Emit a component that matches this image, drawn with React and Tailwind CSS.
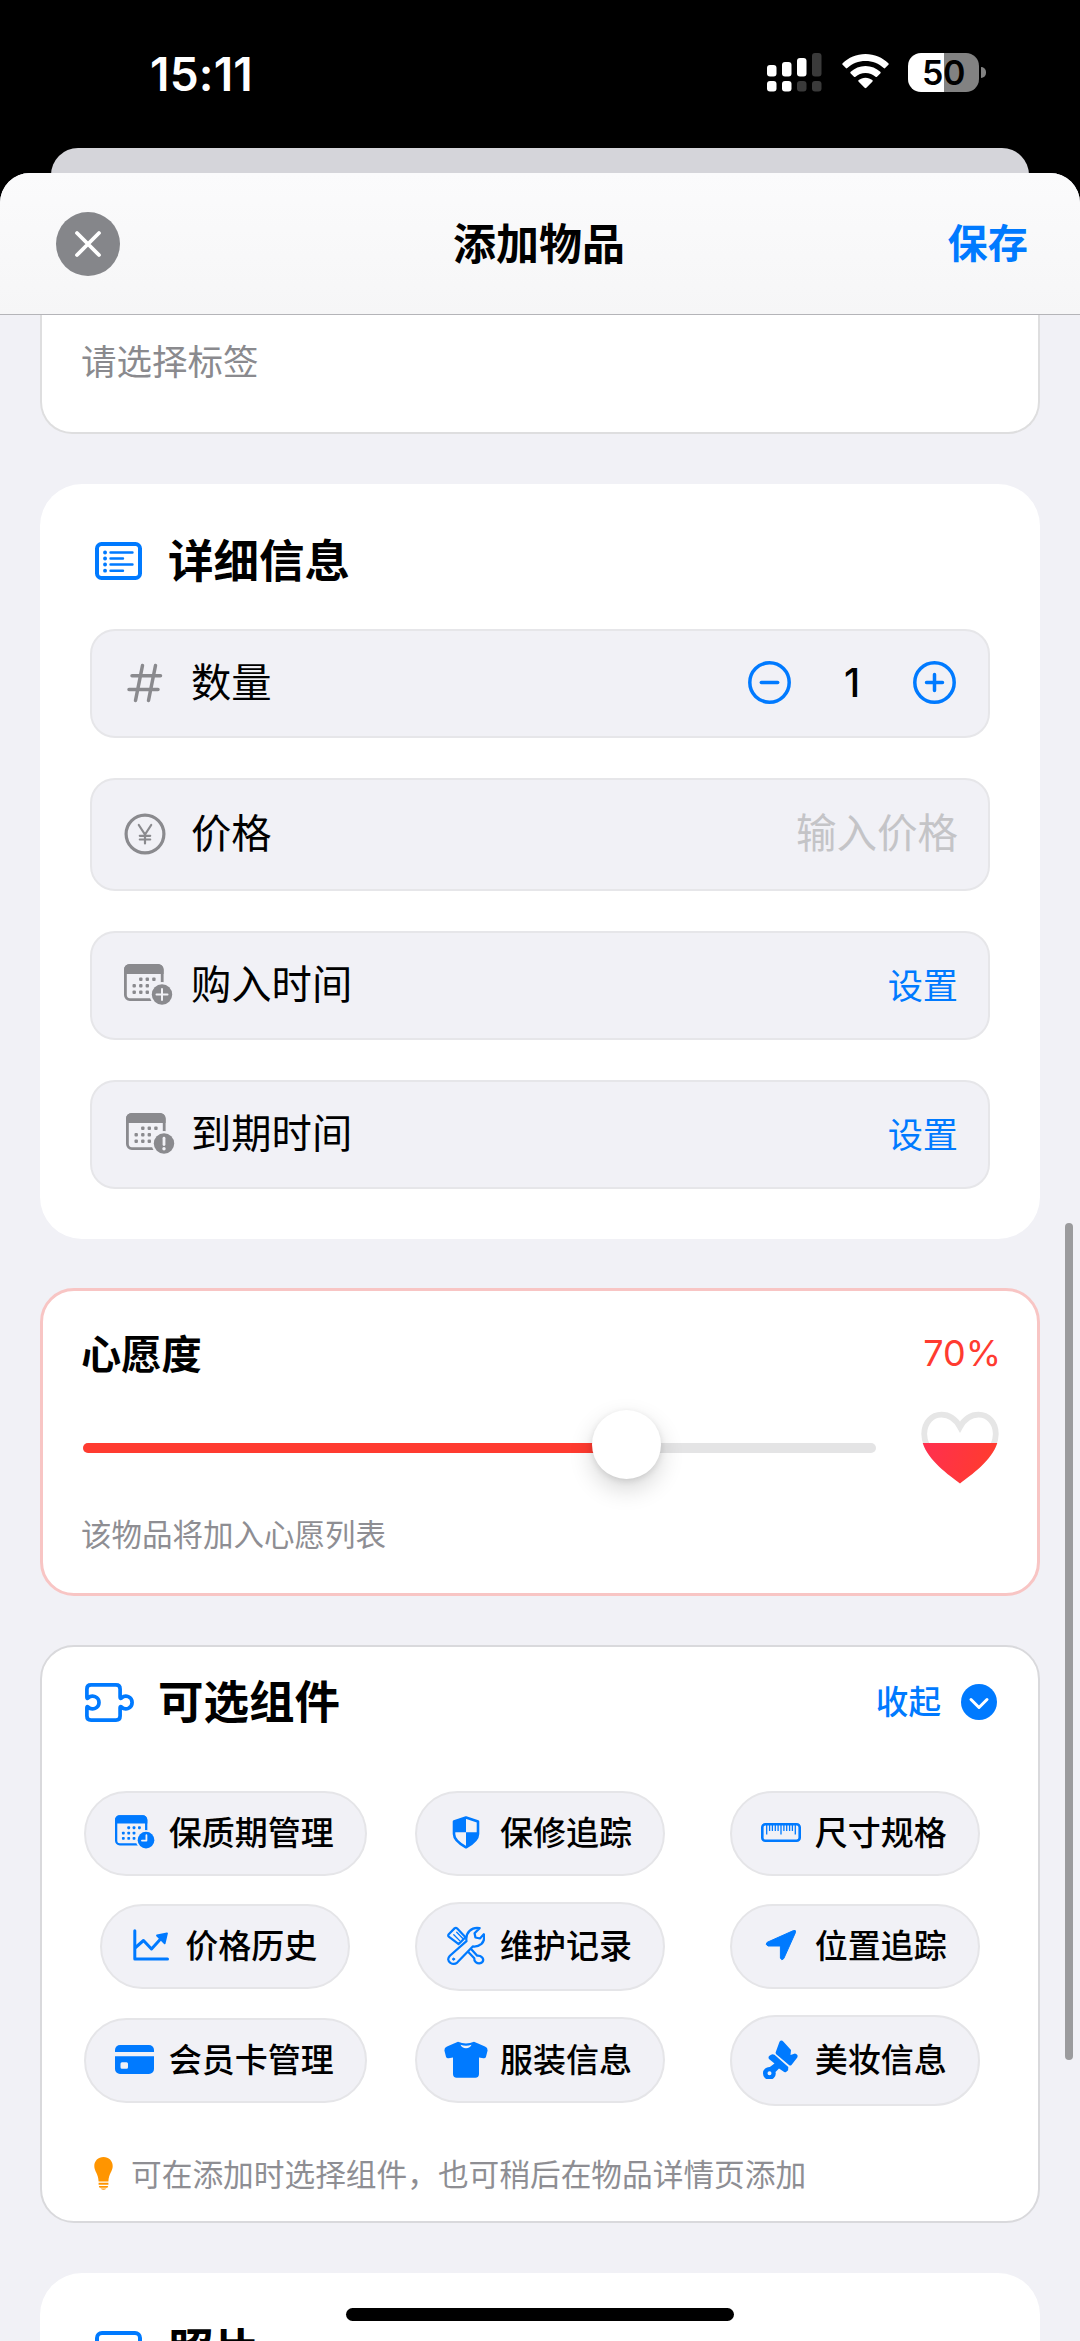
const BLUE = '#007aff';
const PANEL = '#f1f1f6';

function CalendarIcon({ className, color, badge }) {
  const dots = [
    [16.8, 15.3], [23.3, 15.3], [29.9, 15.3],
    [10.2, 21.8], [16.8, 21.8], [23.3, 21.8],
    [10.2, 28.3], [16.8, 28.3], [23.3, 28.3],
  ];
  return (
    <svg viewBox="0 0 49 41" className={className} fill="none">
      <rect x="1.400" y="1.400" width="36.800" height="34.200" rx="4.500" stroke={color} strokeWidth="2.800" />
      <path d="M0 10V5.500A5.500 5.500 0 0 1 5.500 0h28.600a5.500 5.500 0 0 1 5.500 5.500V10z" fill={color} />
      {dots.map(([x, y]) => (
        <rect key={`${x}-${y}`} x={x - 1.7} y={y - 1.7} width="3.400" height="3.400" rx="1" fill={color} />
      ))}
      <circle cx="38" cy="30.500" r="12.400" fill={PANEL} />
      <circle cx="38" cy="30.500" r="10.200" fill={color} />
      {badge === 'plus' && <path d="M38 25v11M32.500 30.500h11" stroke={PANEL} strokeWidth="2" strokeLinecap="round" />}
      {badge === 'alert' && (
        <g>
          <path d="M38 25.200v6.300" stroke={PANEL} strokeWidth="2.800" strokeLinecap="round" />
          <circle cx="38" cy="35.800" r="1.700" fill={PANEL} />
        </g>
      )}
      {badge === 'clock' && <path d="M38.500 24.500v6.500h-5.500" stroke={PANEL} strokeWidth="2.200" strokeLinecap="round" strokeLinejoin="round" />}
    </svg>
  );
}

function ListIcon() {
  return (
    <svg viewBox="0 0 47 38" className="h-[38px] w-[47px]" fill="none" stroke={BLUE} strokeLinecap="round">
      <rect x="2" y="2" width="43" height="34" rx="4.500" strokeWidth="4" />
      <path d="M15.500 10.500h22M15.500 16.500h12.500M15.500 22.500h22M15.500 28.700h12.500" strokeWidth="2.400" />
      <path d="M10 10.500h.1M10 16.500h.1M10 22.500h.1M10 28.700h.1" strokeWidth="3.800" />
    </svg>
  );
}

function PhotoIcon() {
  return (
    <svg viewBox="0 0 47 38" className="h-[38px] w-[47px]" fill="none" stroke={BLUE}>
      <rect x="2" y="2" width="43" height="34" rx="5" strokeWidth="4" />
      <path d="M3 31l11-10 8 7 10-10 12 11" strokeWidth="3" />
    </svg>
  );
}

function PuzzleIcon() {
  return (
    <svg viewBox="0 0 49 39" className="h-[39px] w-[49px]" fill="none" stroke={BLUE} strokeWidth="3.700" strokeLinejoin="round">
      <path d="M1.900 6Q1.900 1.900 6 1.900H31Q35.100 1.900 35.100 6V14.200Q35.100 16 36.600 14.900C40.500 11.300 47.100 13.600 47.100 19.500S40.500 27.700 36.600 24.100Q35.100 23 35.100 24.800V33Q35.100 37.100 31 37.100H6Q1.900 37.100 1.900 33V24.800Q1.900 23 3.200 24.100C7 27.700 14 25.400 14 19.500S7 11.300 3.200 14.900Q1.900 16 1.900 14.200Z" />
    </svg>
  );
}

function HashIcon() {
  return (
    <svg viewBox="0 0 36 40" className="h-[40px] w-[36px]" fill="none" stroke="#8a8a8e" strokeWidth="3.500" strokeLinecap="round">
      <path d="M15.500 2.500L8.500 37.500M28.500 2.500l-7 35M5 12.700h28.500M2 26.600h29" />
    </svg>
  );
}

function YenIcon() {
  return (
    <svg viewBox="0 0 42 42" className="h-[42px] w-[42px]" fill="none" stroke="#8a8a8e" strokeLinecap="round">
      <circle cx="21" cy="21" r="18.900" strokeWidth="3.200" />
      <path d="M14.800 12L21 21.500 27.200 12M21 21.500v9M15.800 22.800h10.400M15.800 26.500h10.400" strokeWidth="2.200" />
    </svg>
  );
}

function ShieldIcon() {
  return (
    <svg viewBox="0 0 28 33" className="h-[33px] w-[28px]" fill="none">
      <path d="M14 1.500L26 5.500V18c0 6-5.500 9.800-12 13.300C7.500 27.800 2 24 2 18V5.500z" stroke={BLUE} strokeWidth="2.600" strokeLinejoin="round" />
      <path d="M14 1.500V16.300H2V5.500zM14 16.300H26V18c0 6-5.500 9.800-12 13.300z" fill={BLUE} />
    </svg>
  );
}

function RulerIcon() {
  return (
    <svg viewBox="0 0 40 19" className="h-[19px] w-[40px]" fill="none" stroke={BLUE}>
      <rect x="1.300" y="1.300" width="37.400" height="16.400" rx="3" strokeWidth="2.600" />
      <path d="M5.700 2v9.500M20 2v9.500M34.300 2v9.500M8.600 2v6M11.400 2v6M14.300 2v6M17.100 2v6M22.900 2v6M25.700 2v6M28.600 2v6M31.400 2v6" strokeWidth="1.300" />
    </svg>
  );
}

function ChartIcon() {
  return (
    <svg viewBox="0 0 36 32" className="h-[32px] w-[36px]" fill="none" stroke={BLUE} strokeWidth="3" strokeLinecap="round" strokeLinejoin="round">
      <path d="M1.800 1.800V30H34.500" />
      <path d="M2.500 18.500l8-7 8 8.500L28 9.500" />
      <path d="M24 6.500l10-2.200-2.300 10z" fill={BLUE} strokeWidth="1.800" />
    </svg>
  );
}

function ToolsIcon() {
  return (
    <svg viewBox="0 0 40 40" className="h-[39px] w-[39px]" fill="none" stroke={BLUE} strokeWidth="2.300" strokeLinecap="round" strokeLinejoin="round">
      <path d="M2.800 8.500L9 2.200q1.300-.8 2.500.4L20 11.500l-7 7L2.800 10.800q-1-1.200 0-2.300z" />
      <path d="M8 9l6 6M11 6.500l6 6" strokeWidth="1.400" />
      <path d="M19 22.500L29 33q-.3 2.500 1.500 4t3.700 1.400q3.800-.6 4-3.600-.3-2.600-3.200-4-1.600-.4-3-.3L22.500 20" />
      <path d="M4 30.500L21 15.500q-1-6.500 3.200-10.500 4.300-4 10.300-2.800L29.300 7.500l.9 4.300 4.600 1 4-4.300q1.500 6-2.400 9.800-4 3.400-9 2.700L11.500 37.500q-3.200 2.500-7 .3-4.200-3.200-.5-7.300z" fill={PANEL} />
      <circle cx="7.800" cy="34" r="1.100" fill={BLUE} strokeWidth="1" />
    </svg>
  );
}

function LocationIcon() {
  return (
    <svg viewBox="0 0 32 32" className="h-[32px] w-[32px]">
      <path d="M2.200 13.300L28.600 1.500q2.500-.7 1.900 1.900L18.800 29.500q-2.200 2.700-3.400-.5V17H3Q-.2 15.500 2.200 13.300z" fill={BLUE} stroke={BLUE} strokeLinejoin="round" />
    </svg>
  );
}

function CardIcon() {
  return (
    <svg viewBox="0 0 39 29" className="h-[29px] w-[39px]" fill={BLUE}>
      <path d="M0 7V5a5 5 0 0 1 5-5h29a5 5 0 0 1 5 5v2z" />
      <path fillRule="evenodd" d="M0 11.300h39V24a5 5 0 0 1-5 5H5a5 5 0 0 1-5-5zM7 17.300q-1.500 0-1.500 1.500v3.500q0 1.500 1.500 1.500h4.500q1.500 0 1.500-1.500v-3.500q0-1.500-1.500-1.500z" />
    </svg>
  );
}

function ShirtIcon() {
  return (
    <svg viewBox="0 0 44 37" className="h-[37px] w-[44px]">
      <path d="M14 .8q8 3.200 16 0L41 5.600q2.800 1.200 2.600 3.800l-1.600 6.400q-.6 1.800-2.600 1.500l-4.400-.8V33q0 3.700-3.700 3.700H12.700Q9 36.700 9 33V16.500l-4.400.8q-2 .3-2.600-1.500L.4 9.400Q.2 6.800 3 5.600z" fill={BLUE} />
      <path d="M16.500 3.800q5.500 1.700 11 0-1.300 3.400-5.500 3.400t-5.500-3.400z" fill={PANEL} />
    </svg>
  );
}

function BrushIcon() {
  return (
    <svg viewBox="0 0 35 39" className="h-[39px] w-[35px]" fill={BLUE}>
      <path d="M12.600 12.500L16.500 1.800q1.800-2.600 4 0L28 10l-.5 5 4.500-1.600q3.600.8 2.300 4L28.500 25q-1.300 1-2.500 0L12.900 14z" />
      <path fillRule="evenodd" d="M11.500 14.800L25.300 27l-.2 3.300-2 1.700q-1.500.7-3-.7L16 28.600l-3.500 3.300.3 1.600a6.400 6.400 0 1 1-6-6.500l4.700-3.600-5.500-4.500q-1.200-1.800.5-3.200 2.500-2.500 5-.9zM6.500 31.300a2 2 0 1 0 0 4 2 2 0 0 0 0-4z" />
    </svg>
  );
}

function BulbIcon() {
  return (
    <svg viewBox="0 0 19 33" className="h-[33px] w-[19px]" fill="#ff9500">
      <path d="M9.500 0C4.200 0 .3 3.900.3 8.900c0 5.500 4 7.300 4.300 15.600h9.800c.3-8.300 4.300-10.100 4.300-15.600C18.700 3.900 14.800 0 9.500 0z" />
      <path d="M4.600 25.700h9.800v2H4.600zM4.800 28.900h9.400l-.8 1.800H5.600zM6.500 31.600h6q-3 2.400-6 0z" />
    </svg>
  );
}

function StepIcon({ plus }) {
  return (
    <svg viewBox="0 0 43 43" className="h-[43px] w-[43px]" fill="none" stroke={BLUE} strokeWidth="3.500" strokeLinecap="round">
      <circle cx="21.500" cy="21.500" r="19.700" />
      <path d={plus ? 'M13.500 21.500h16M21.500 13.500v16' : 'M13.300 21.500h16.400'} />
    </svg>
  );
}

function Heart() {
  const shape = 'M39 72.500C26 62.500.3 45 .3 23 .3 9.500 9 .8 20.500.8 28.500.8 35 5 39 12 43 5 49.500.8 57.500.8 69 .8 77.700 9.500 77.700 23 77.700 45 52 62.500 39 72.500z';
  const ring = 'M39 68.500C27 59 3.200 43 3.200 23 3.200 11.500 11 3.700 20.500 3.700 28.500 3.700 34.500 8 39 16 43.500 8 49.500 3.700 57.500 3.700 67 3.700 74.800 11.500 74.800 23 74.800 43 51 59 39 68.500z';
  return (
    <svg viewBox="0 0 78 73" className="h-[73px] w-[78px]">
      <defs>
        <clipPath id="heart-level"><rect x="0" y="32" width="78" height="41" /></clipPath>
        <linearGradient id="heart-fill" x1="0" x2="1" y1="0" y2=".3">
          <stop offset="0" stopColor="#ff2d55" />
          <stop offset="1" stopColor="#ff3b30" />
        </linearGradient>
      </defs>
      <path d={ring} fill="none" stroke="#e6e6e6" strokeWidth="5.800" />
      <path d={shape} fill="url(#heart-fill)" clipPath="url(#heart-level)" />
    </svg>
  );
}

function StatusBar() {
  return (
    <div className="flex h-[148px] shrink-0 items-start justify-between pr-[94px] pl-[150px]">
      <span className="mt-[46px] font-['Inter'] text-[46px] leading-[56px] font-semibold tracking-[0.2px] text-white">15:11</span>
      <div className="mt-[53px] flex">
        <svg viewBox="0 0 56 39" className="h-[39px] w-[56px]" fill="#fff">
          <rect x="0" y="12" width="9.500" height="11.500" rx="3" />
          <rect x="15" y="9" width="9.500" height="14.500" rx="3" />
          <rect x="30" y="5" width="9.500" height="18.500" rx="3" />
          <rect x="45" y="0" width="9.500" height="23.500" rx="3" fill="#3a3a3a" />
          <rect x="0" y="28" width="9.500" height="10.500" rx="3" />
          <rect x="15" y="28" width="9.500" height="10.500" rx="3" />
          <rect x="30" y="28" width="9.500" height="10.500" rx="3" fill="#3a3a3a" />
          <rect x="45" y="28" width="9.500" height="10.500" rx="3" fill="#3a3a3a" />
        </svg>
        <svg viewBox="0 0 48 37" className="mt-px ml-[19px] h-[36px] w-[47px]" fill="#fff">
          <path d="M24 0C14.800 0 6.500 3.600.5 9.500q-.8.800 0 1.600l3.300 3.400q.7.700 1.500 0C10.200 9.900 16.800 7.300 24 7.300s13.800 2.600 18.700 7.200q.8.700 1.500 0l3.300-3.400q.8-.8 0-1.600C41.500 3.600 33.200 0 24 0z" />
          <path d="M24 12.300c-5.900 0-11.200 2.300-15.200 6-.6.600-.6 1.100 0 1.700l3.400 3.300q.7.700 1.500 0c2.700-2.400 6.300-3.900 10.300-3.900s7.600 1.500 10.300 3.900q.8.700 1.500 0l3.400-3.300c.6-.6.600-1.100 0-1.700-4-3.700-9.300-6-15.200-6z" />
          <path d="M24 24.300c-2.700 0-5.100.9-7 2.500-.6.600-.6 1.100 0 1.700l6.100 6.300q.9.900 1.800 0l6.100-6.300c.6-.6.600-1.100 0-1.700-1.900-1.600-4.300-2.500-7-2.500z" />
        </svg>
        <div className="ml-[19px] flex h-[39px] w-[71px] items-center justify-center rounded-[13px] bg-[linear-gradient(90deg,#fff_51%,#828282_51%)]">
          <span className="font-['Inter'] text-[34px] leading-[39px] font-semibold tracking-[-0.5px] text-black">50</span>
        </div>
        <div className="mt-[14px] ml-[2px] h-[11px] w-[5px] rounded-r-full bg-[#828282]" />
      </div>
    </div>
  );
}

function DetailRow({ icon, label, tall, children }) {
  return (
    <div className={`flex ${tall ? 'h-[113px]' : 'h-[109px]'} items-center rounded-[25px] border-2 border-[#e6e6e9] bg-[#f1f1f6] pr-[30px] pl-[26px]`}>
      <div className="flex w-[54px] -translate-y-px justify-center">{icon}</div>
      <span className="ml-[19px] -translate-y-[3px] text-[40.3px]">{label}</span>
      <div className="ml-auto flex items-center">{children}</div>
    </div>
  );
}

const COMPONENTS = [
  { label: '保质期管理', icon: <CalendarIcon className="h-[34px] w-[40px]" color={BLUE} badge="clock" />, size: 'h-[85px]' },
  { label: '保修追踪', icon: <ShieldIcon />, size: 'h-[85px]' },
  { label: '尺寸规格', icon: <RulerIcon />, size: 'h-[85px]' },
  { label: '价格历史', icon: <ChartIcon />, size: 'h-[85px]' },
  { label: '维护记录', icon: <ToolsIcon />, size: 'h-[89px]' },
  { label: '位置追踪', icon: <LocationIcon />, size: 'h-[85px]' },
  { label: '会员卡管理', icon: <CardIcon />, size: 'h-[85px]' },
  { label: '服装信息', icon: <ShirtIcon />, size: 'h-[86px]' },
  { label: '美妆信息', icon: <BrushIcon />, size: 'h-[91px]' },
];

export default function App() {
  return (
    <div className="relative flex h-[2341px] w-[1080px] flex-col overflow-hidden bg-black font-['Noto_Sans_CJK_SC',sans-serif] leading-none text-black">
      <StatusBar />
      <div className="mx-[51px] -mb-[30px] h-[55px] shrink-0 rounded-t-[27px] bg-[#d5d5da]" />
      <div className="relative flex h-[2168px] shrink-0 flex-col overflow-hidden rounded-t-[30px] bg-[#f1f1f6]">
        <header className="grid h-[142px] shrink-0 grid-cols-3 items-center border-b border-[#b4b4b8] bg-linear-to-b from-[#fbfbfc] to-[#f6f6f7] pr-[52px] pl-[56px]">
          <button className="flex size-[64px] items-center justify-center rounded-full bg-[#85868a]">
            <svg viewBox="0 0 28 28" className="size-[28px]" stroke="#fff" strokeWidth="3.800" strokeLinecap="round">
              <path d="M3 3l22 22M25 3L3 25" />
            </svg>
          </button>
          <h1 className="-translate-x-[3px] -translate-y-[2px] text-center text-[43px] font-bold whitespace-nowrap">添加物品</h1>
          <span className="-translate-y-[2px] text-right text-[40.2px] font-bold text-[#007aff]">保存</span>
        </header>

        <main className="flex flex-col px-[40px]">
          <section className="h-[119px] rounded-b-[32px] border-2 border-t-0 border-[#dededf] bg-white pt-[26px] pl-[39px]">
            <p className="text-[35.5px] leading-[38px] text-[#8a8a8e]">请选择标签</p>
          </section>

          <section className="mt-[50px] flex h-[755px] flex-col rounded-[42px] bg-white px-[50px]">
            <div className="flex h-[145px] items-center gap-[26px] pt-[8px] pl-[5px]">
              <ListIcon />
              <h2 className="-translate-y-[2px] text-[45.5px] font-bold">详细信息</h2>
            </div>
            <div className="flex flex-col gap-[40px]">
              <DetailRow icon={<HashIcon />} label="数量">
                <div className="flex -translate-x-[2px] -translate-y-px items-center">
                  <StepIcon />
                  <span className="w-[122px] text-center font-['Inter'] text-[39px] font-medium">1</span>
                  <StepIcon plus />
                </div>
              </DetailRow>
              <DetailRow icon={<YenIcon />} label="价格" tall>
                <span className="-translate-y-[3px] text-[40.500px] text-[#c4c4c7]">输入价格</span>
              </DetailRow>
              <DetailRow icon={<CalendarIcon className="h-[41px] w-[49px] translate-x-[3px]" color="#8a8a8e" badge="plus" />} label="购入时间">
                <span className="-translate-y-[2px] text-[35.200px] text-[#007aff]">设置</span>
              </DetailRow>
              <DetailRow icon={<CalendarIcon className="h-[41px] w-[49px] translate-x-[5px]" color="#8a8a8e" badge="alert" />} label="到期时间">
                <span className="-translate-y-[2px] text-[35.200px] text-[#007aff]">设置</span>
              </DetailRow>
            </div>
          </section>

          <section className="mt-[49px] flex h-[308px] flex-col rounded-[34px] border-3 border-[#f8c5c4] bg-white pr-[38px] pl-[38px]">
            <div className="mt-[36px] flex h-[50px] items-center justify-between">
              <h2 className="text-[40.200px] font-bold">心愿度</h2>
              <span className="translate-x-[2px] translate-y-px font-['Inter'] text-[36px] text-[#ff3b30]">70%</span>
            </div>
            <div className="mt-[34px] flex h-[74px] items-center justify-between">
              <div className="relative ml-[2px] h-[10px] w-[793px] rounded-full bg-[#e4e4e5]">
                <div className="h-full w-[545px] rounded-full bg-[#ff3b30]" />
                <div className="absolute -top-[33px] left-[509px] size-[69px] rounded-full bg-white shadow-[0_10px_24px_rgba(0,0,0,0.16),0_2px_6px_rgba(0,0,0,0.1)]" />
              </div>
              <div className="flex -translate-y-px"><Heart /></div>
            </div>
            <p className="mt-[32px] text-[30.500px] leading-[32px] text-[#8e8e93]">该物品将加入心愿列表</p>
          </section>

          <section className="mt-[49px] flex h-[578px] flex-col rounded-[34px] border-2 border-[#d9d9dc] bg-white">
            <div className="mt-[25px] flex h-[60px] items-center pr-[41px] pl-[43px]">
              <PuzzleIcon />
              <h2 className="ml-[24px] -translate-y-[2px] text-[45.500px] font-bold">可选组件</h2>
              <span className="ml-auto -translate-y-[2px] text-[32.600px] font-medium text-[#007aff]">收起</span>
              <svg viewBox="0 0 36 36" className="ml-[20px] size-[36px]" fill="none">
                <circle cx="18" cy="18" r="18" fill={BLUE} />
                <path d="M10 15.500l8 8 8-8" stroke="#fff" strokeWidth="3" strokeLinecap="round" strokeLinejoin="round" />
              </svg>
            </div>
            <div className="mx-[26px] mt-[56px] grid grid-cols-3 grid-rows-[90px_90px_92px] items-center justify-items-center gap-y-[23px]">
              {COMPONENTS.map(({ label, icon, size }) => (
                <div key={label} className={`flex ${size} items-center rounded-full border-2 border-[#e5e5e8] bg-[#f1f1f6] pr-[31px] pl-[30px]`}>
                  <div className="flex w-[38px] shrink-0 -translate-y-px items-center justify-center">
                    <div className="flex shrink-0">{icon}</div>
                  </div>
                  <span className="ml-[15px] -translate-y-[2px] text-[33px] font-medium whitespace-nowrap">{label}</span>
                </div>
              ))}
            </div>
            <div className="mt-[51px] flex items-center pl-[52px]">
              <BulbIcon />
              <p className="ml-[18px] text-[30.700px] whitespace-nowrap text-[#8e8e93]">可在添加时选择组件，也可稍后在物品详情页添加</p>
            </div>
          </section>

          <section className="mt-[50px] h-[200px] rounded-[42px] bg-white px-[50px]">
            <div className="flex h-[145px] items-center gap-[26px] pt-[8px] pl-[5px]">
              <PhotoIcon />
              <h2 className="-translate-y-[2px] text-[45.500px] font-bold">照片</h2>
            </div>
          </section>
        </main>
      </div>
      <div className="absolute top-[1223px] right-[7px] h-[837px] w-[8px] rounded-full bg-[#9b9b9d]" />
      <div className="absolute top-[2308px] left-[346px] h-[13px] w-[388px] rounded-full bg-black" />
    </div>
  );
}
